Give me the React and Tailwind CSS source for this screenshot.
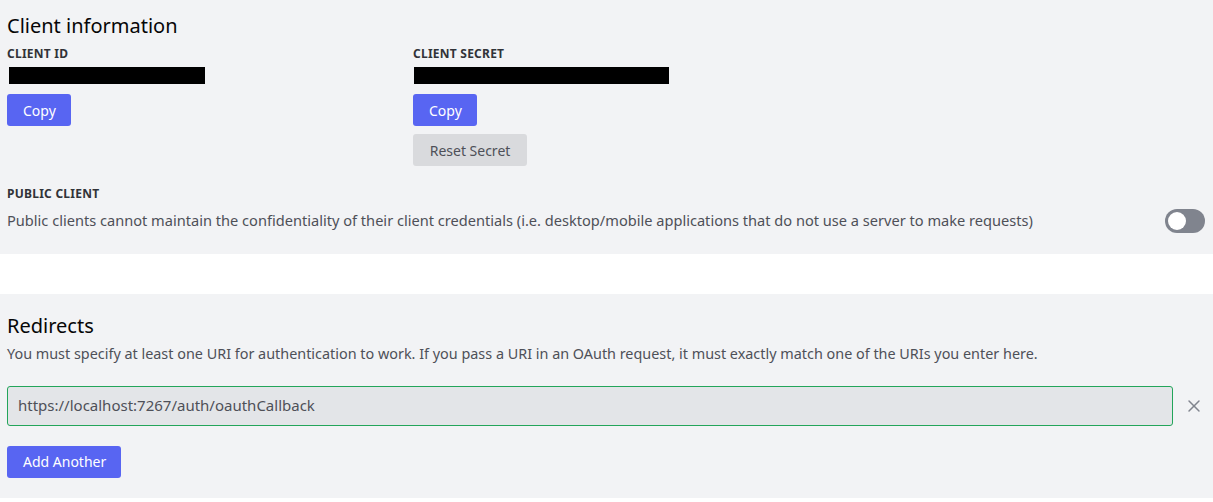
import React, { useState } from 'react';
import { X } from 'lucide-react';

const font = { fontFamily: '"Noto Sans", "Open Sans", sans-serif' };

function Label({ children }) {
  return <div className="text-[12px] font-bold uppercase tracking-[0.02em] text-[#313338] leading-[14px]">{children}</div>;
}

function BlueButton({ children, className = '' }) {
  return (
    <button className={`h-8 whitespace-nowrap rounded-[3px] bg-[#5865f2] px-4 text-[14px] text-white ${className}`}>
      {children}
    </button>
  );
}

export default function App() {
  const [isPublic, setIsPublic] = useState(false);

  return (
    <div style={font} className="w-[1213px] h-[502px] bg-white text-[#313338]">
      <section className="bg-[#f2f3f5] h-[254px] px-[7px] pt-[13px]">
        <h2 className="text-[20px] leading-[25px] text-[#060607]">Client information</h2>
        <div className="mt-[9px] flex">
          <div className="w-[406px]">
            <Label>CLIENT ID</Label>
            <div className="mt-[6px] ml-[2px] h-[17px] w-[196px] bg-black" />
            <BlueButton className="mt-[10px] w-[64px]">Copy</BlueButton>
          </div>
          <div className="flex flex-col items-start">
            <Label>CLIENT SECRET</Label>
            <div className="mt-[6px] ml-[1px] h-[17px] w-[255px] bg-black" />
            <BlueButton className="mt-[10px] w-[64px]">Copy</BlueButton>
            <button className="mt-[8px] h-8 w-[114px] rounded-[3px] bg-[#d9dadd] text-[14px] text-[#4e5058]">
              Reset Secret
            </button>
          </div>
        </div>
        <div className="mt-[21px]">
          <Label>PUBLIC CLIENT</Label>
          <div className="mt-[8px] flex items-center justify-between pr-[1px]">
            <p className="text-[14.6px] text-[#4e5058]">
              Public clients cannot maintain the confidentiality of their client credentials (i.e. desktop/mobile applications that do not use a server to make requests)
            </p>
            <button
              onClick={() => setIsPublic(!isPublic)}
              className={`relative h-6 w-10 rounded-full ${isPublic ? 'bg-[#23a55a]' : 'bg-[#80848e]'}`}
            >
              <span className={`absolute top-[3px] h-[18px] w-[18px] rounded-full bg-white ${isPublic ? 'left-[19px]' : 'left-[3px]'}`} />
            </button>
          </div>
        </div>
      </section>

      <div className="h-[40px] bg-white" />

      <section className="bg-[#f2f3f5] h-[204px] px-[7px] pt-[19px]">
        <h2 className="text-[20px] leading-[25px] text-[#060607]">Redirects</h2>
        <p className="mt-[5px] text-[14.4px] text-[#4e5058]">
          You must specify at least one URI for authentication to work. If you pass a URI in an OAuth request, it must exactly match one of the URIs you enter here.
        </p>
        <div className="mt-[21px] flex items-center">
          <div className="flex h-10 w-[1166px] items-center rounded-[3px] border border-[#23a55a] bg-[#e3e5e8] px-[10px] text-[15px] text-[#4e5058]">
            https://localhost:7267/auth/oauthCallback
          </div>
          <X className="ml-[11px] h-[20px] w-[20px] text-[#80848e]" strokeWidth={1.75} />
        </div>
        <BlueButton className="mt-[20px] w-[114px]">Add Another</BlueButton>
      </section>
    </div>
  );
}
